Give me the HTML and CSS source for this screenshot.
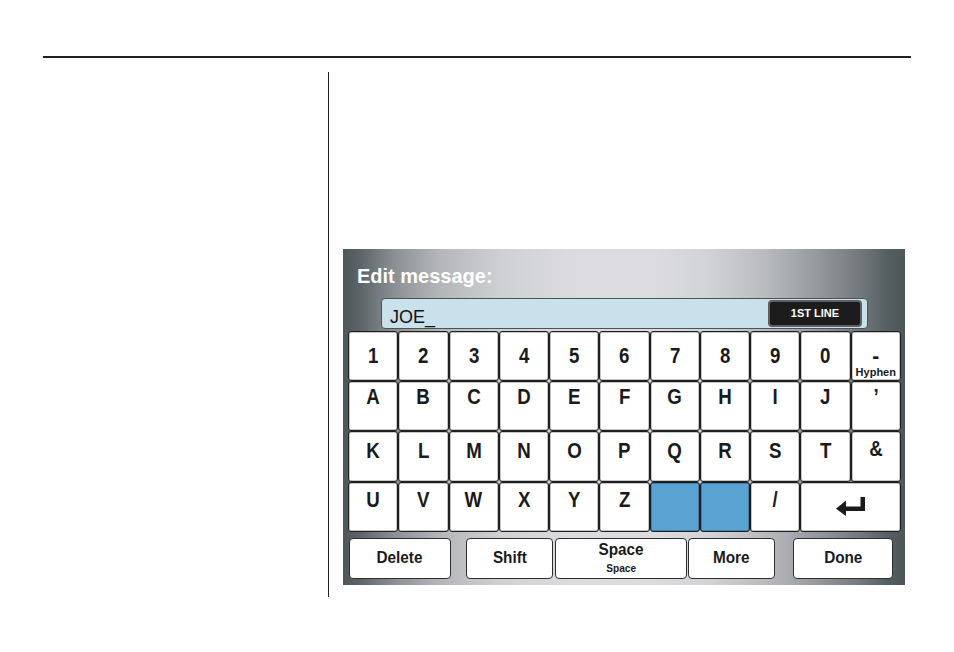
FILE: index.html
```html
<!DOCTYPE html>
<html>
<head>
<meta charset="utf-8">
<link rel="stylesheet" href="styles.css">
</head>
<body>
<div class="page">
  <div class="rule"></div>
  <div class="main">
    <div class="side"></div>
    <div class="content">
      <div class="screen">
        <div class="title">Edit message:</div>
        <div class="field"><span class="entry">JOE_</span><span class="linebtn">1ST LINE</span></div>
        <div class="keys">
          <div class="key r1"><span class="lbl">1</span></div>
          <div class="key r1"><span class="lbl">2</span></div>
          <div class="key r1"><span class="lbl">3</span></div>
          <div class="key r1"><span class="lbl">4</span></div>
          <div class="key r1"><span class="lbl">5</span></div>
          <div class="key r1"><span class="lbl">6</span></div>
          <div class="key r1"><span class="lbl">7</span></div>
          <div class="key r1"><span class="lbl">8</span></div>
          <div class="key r1"><span class="lbl">9</span></div>
          <div class="key r1"><span class="lbl">0</span></div>
          <div class="key r1"><span class="lbl dash">-</span><span class="sub">Hyphen</span></div>

          <div class="key r2"><span class="lbl">A</span></div>
          <div class="key r2"><span class="lbl">B</span></div>
          <div class="key r2"><span class="lbl">C</span></div>
          <div class="key r2"><span class="lbl">D</span></div>
          <div class="key r2"><span class="lbl">E</span></div>
          <div class="key r2"><span class="lbl">F</span></div>
          <div class="key r2"><span class="lbl">G</span></div>
          <div class="key r2"><span class="lbl">H</span></div>
          <div class="key r2"><span class="lbl">I</span></div>
          <div class="key r2"><span class="lbl">J</span></div>
          <div class="key r2"><span class="lbl">’</span></div>

          <div class="key r3"><span class="lbl">K</span></div>
          <div class="key r3"><span class="lbl">L</span></div>
          <div class="key r3"><span class="lbl">M</span></div>
          <div class="key r3"><span class="lbl">N</span></div>
          <div class="key r3"><span class="lbl">O</span></div>
          <div class="key r3"><span class="lbl">P</span></div>
          <div class="key r3"><span class="lbl">Q</span></div>
          <div class="key r3"><span class="lbl">R</span></div>
          <div class="key r3"><span class="lbl">S</span></div>
          <div class="key r3"><span class="lbl">T</span></div>
          <div class="key r3 amp"><span class="lbl">&amp;</span></div>

          <div class="key r4"><span class="lbl">U</span></div>
          <div class="key r4"><span class="lbl">V</span></div>
          <div class="key r4"><span class="lbl">W</span></div>
          <div class="key r4"><span class="lbl">X</span></div>
          <div class="key r4"><span class="lbl">Y</span></div>
          <div class="key r4"><span class="lbl">Z</span></div>
          <div class="key blue"></div>
          <div class="key blue"></div>
          <div class="key r4"><span class="lbl">/</span></div>
          <div class="key enter">
            <svg width="30" height="19" viewBox="0 0 30 19"><rect x="24.5" y="0" width="4.5" height="14" fill="#1a1a1a"/><rect x="8" y="9.5" width="21" height="4.5" fill="#1a1a1a"/><polygon points="0,11.7 10,3.5 10,19" fill="#1a1a1a"/></svg>
          </div>
        </div>
        <div class="actions">
          <div class="btn delete"><span class="blbl">Delete</span></div>
          <div class="btn shift"><span class="blbl">Shift</span></div>
          <div class="btn space"><span class="blbl">Space</span><span class="bsub">Space</span></div>
          <div class="btn more"><span class="blbl">More</span></div>
          <div class="btn done"><span class="blbl">Done</span></div>
        </div>
      </div>
    </div>
  </div>
</div>
</body>
</html>
```

FILE: styles.css
```css
html, body {
  margin: 0;
  padding: 0;
  background: #ffffff;
}
body {
  width: 954px;
  height: 652px;
  overflow: hidden;
  font-family: "Liberation Sans", Arial, sans-serif;
  color: #1a1a1a;
}
.page {
  padding-top: 56px;
}
.rule {
  margin-left: 43px;
  width: 868px;
  height: 2px;
  background: #231f20;
}
.main {
  display: flex;
  margin-top: 14px;
}
.side {
  width: 328px;
  height: 525px;
  border-right: 1px solid #231f20;
  flex: none;
}
.content {
  padding-left: 14px;
  padding-top: 177px;
}
.screen {
  width: 562px;
  height: 336px;
  box-sizing: border-box;
  background: linear-gradient(to right,
    #4d5659 0%, #5c6468 3%, #8a8f93 9%, #b3b5b9 17%, #cfd0d4 28%,
    #dadadf 40%, #dcdce0 55%, #d2d3d7 65%, #b9bbbf 75%, #969a9e 84%,
    #72797c 92%, #555e61 97%, #4d5659 100%);
}
.title {
  padding-top: 15px;
  padding-left: 14px;
  font-size: 20px;
  line-height: 24px;
  font-weight: bold;
  color: #ffffff;
}
.field {
  margin-top: 10px;
  margin-left: 38px;
  width: 487px;
  height: 31px;
  box-sizing: border-box;
  border: 1px solid #4e5256;
  border-radius: 4px;
  background: #c9e1eb;
  display: flex;
  justify-content: space-between;
  align-items: center;
}
.entry {
  align-self: flex-start;
  padding-top: 9px;
  padding-left: 8px;
  font-size: 18px;
  line-height: 18px;
  color: #111;
}
.linebtn {
  margin-right: 5px;
  width: 94px;
  height: 27px;
  box-sizing: border-box;
  border: 2px solid #5e6164;
  border-radius: 4px;
  background: #1c1c1c;
  color: #ffffff;
  font-size: 11px;
  font-weight: bold;
  line-height: 23px;
  text-align: center;
}
.keys {
  margin-top: 2px;
  margin-left: 5px;
  display: grid;
  grid-template-columns: repeat(11, 50.27px);
  grid-auto-rows: 50.2px;
}
.key {
  box-sizing: border-box;
  border: 1px solid #1e1e1e;
  border-radius: 3px;
  background: #ffffff;
  box-shadow: inset 0 0 0 0.5px rgba(0, 0, 0, 0.45);
  display: flex;
  flex-direction: column;
  align-items: center;
}
.lbl {
  display: inline-block;
  font-size: 22px;
  line-height: 22px;
  font-weight: bold;
  transform: scaleX(0.85);
  color: #1a1a1a;
}
.dash {
  margin-top: 1px;
  line-height: 19px;
  transform: scaleX(0.95);
}
.sub {
  display: block;
  margin-top: 1px;
  font-size: 11px;
  line-height: 12px;
  font-weight: bold;
  color: #1a1a1a;
}
.r1 { padding-top: 12.5px; }
.r2 { padding-top: 4px; }
.r3 { padding-top: 7.5px; }
.r3.amp { padding-top: 6px; }
.r4 { padding-top: 6.5px; }
.blue {
  background: #5ba3d3;
}
.enter {
  grid-column: span 2;
  justify-content: center;
  padding-left: 1px;
}
.actions {
  margin-top: 6px;
  margin-left: 6px;
  display: flex;
  height: 41px;
}
.btn {
  box-sizing: border-box;
  height: 41px;
  border: 1px solid #2e2e2e;
  border-radius: 4px;
  background: #ffffff;
  display: flex;
  flex-direction: column;
  align-items: center;
  justify-content: center;
  padding-bottom: 1px;
}
.blbl {
  display: inline-block;
  font-size: 17px;
  line-height: 17px;
  font-weight: bold;
  transform: scaleX(0.9);
  color: #1a1a1a;
}
.bsub {
  display: inline-block;
  margin-top: 4px;
  font-size: 11px;
  line-height: 12px;
  font-weight: bold;
  transform: scaleX(0.92);
  color: #1a1a1a;
}
.delete { width: 102px; }
.shift { width: 87px; margin-left: 15px; }
.space { width: 132px; margin-left: 2px; }
.more { width: 87px; margin-left: 1px; }
.done { width: 100px; margin-left: 18px; }
```
